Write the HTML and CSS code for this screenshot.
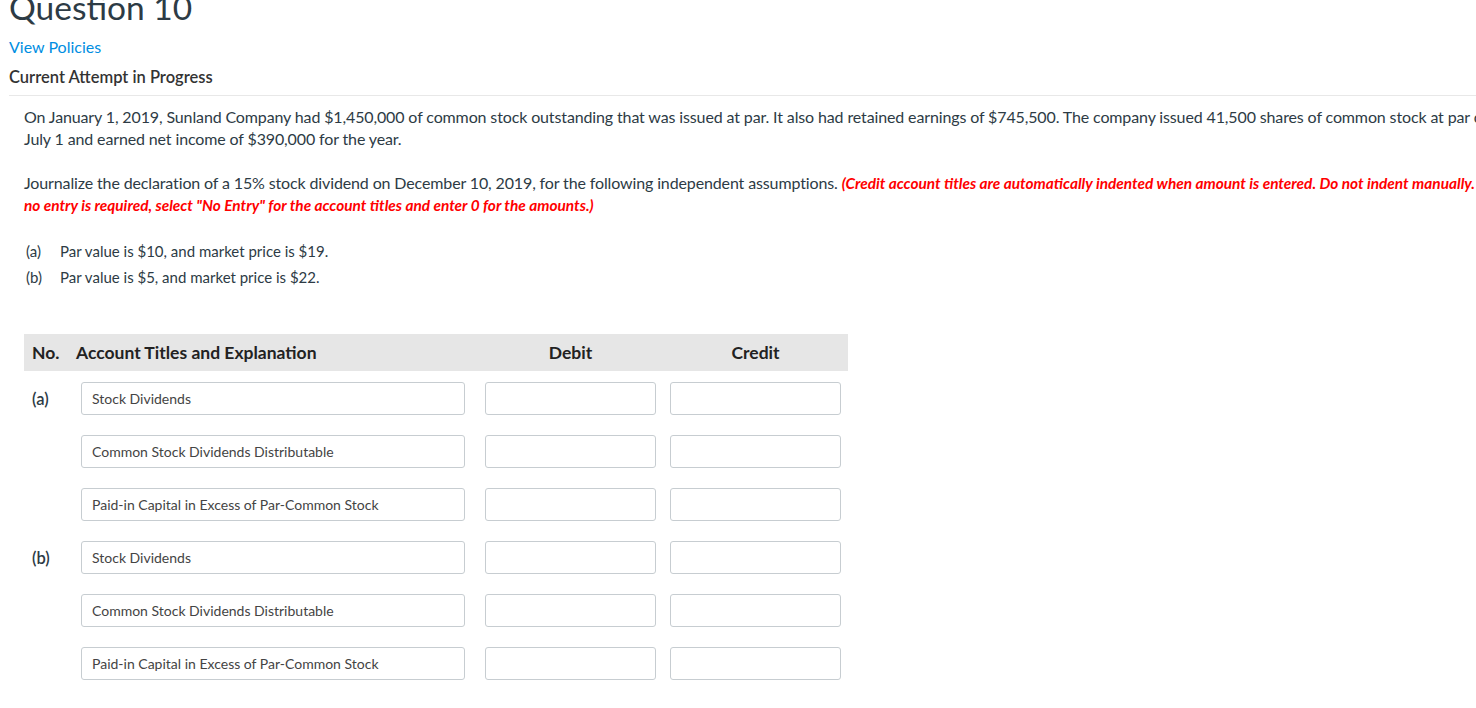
FILE: index.html
```html
<!DOCTYPE html>
<html lang="en">
<head>
  <meta charset="UTF-8" />
  <meta name="viewport" content="width=device-width, initial-scale=1.0" />
  <title>Question 10</title>
  <link rel="stylesheet" href="styles.css">
</head>
<body>
  <div class="pagina">
    <h1 class="titulo">Question 10</h1>
    <a class="politicas" href="#">View Policies</a>
    <div class="intento">Current Attempt in Progress</div>

    <div class="pregunta">
      <p>On January 1, 2019, Sunland Company had $1,450,000 of common stock outstanding that was issued at par. It also had retained earnings of $745,500. The company issued 41,500 shares of common stock at par on<br>July 1 and earned net income of $390,000 for the year.</p>

      <p>Journalize the declaration of a 15% stock dividend on December 10, 2019, for the following independent assumptions. <span class="aviso">(Credit account titles are automatically indented when amount is entered. Do not indent manually. If<br>no entry is required, select "No Entry" for the account titles and enter 0 for the amounts.)</span></p>

      <ul class="supuestos">
        <li><span class="letra">(a)</span>Par value is $10, and market price is $19.</li>
        <li><span class="letra">(b)</span>Par value is $5, and market price is $22.</li>
      </ul>

      <div class="tabla">
        <div class="cabecera">
          <div class="c-no">No.</div>
          <div class="c-cuenta">Account Titles and Explanation</div>
          <div class="c-monto">Debit</div>
          <div class="c-monto">Credit</div>
        </div>

        <div class="fila">
          <div class="etiqueta">(a)</div>
          <input class="cuenta" type="text" value="Stock Dividends">
          <input class="debe" type="text">
          <input class="haber" type="text">
        </div>
        <div class="fila">
          <div class="etiqueta"></div>
          <input class="cuenta" type="text" value="Common Stock Dividends Distributable">
          <input class="debe" type="text">
          <input class="haber" type="text">
        </div>
        <div class="fila">
          <div class="etiqueta"></div>
          <input class="cuenta" type="text" value="Paid-in Capital in Excess of Par-Common Stock">
          <input class="debe" type="text">
          <input class="haber" type="text">
        </div>

        <div class="fila">
          <div class="etiqueta">(b)</div>
          <input class="cuenta" type="text" value="Stock Dividends">
          <input class="debe" type="text">
          <input class="haber" type="text">
        </div>
        <div class="fila">
          <div class="etiqueta"></div>
          <input class="cuenta" type="text" value="Common Stock Dividends Distributable">
          <input class="debe" type="text">
          <input class="haber" type="text">
        </div>
        <div class="fila">
          <div class="etiqueta"></div>
          <input class="cuenta" type="text" value="Paid-in Capital in Excess of Par-Common Stock">
          <input class="debe" type="text">
          <input class="haber" type="text">
        </div>
      </div>
    </div>
  </div>
</body>
</html>
```

FILE: styles.css
```css
html, body {
  overflow: hidden;
}
body {
  margin: 0;
  font-family: Lato, "Open Sans", sans-serif;
  color: #2d3b45;
  background: #fff;
}
.pagina {
  width: 1700px;
  padding-left: 9px;
}
.titulo {
  font-size: 33.5px;
  font-weight: normal;
  line-height: 36px;
  margin: -11px 0 0 0;
}
.politicas {
  display: block;
  margin-top: 12px;
  font-size: 16px;
  line-height: 20px;
  color: #008ee2;
  text-decoration: none;
}
.intento {
  margin-top: 10px;
  font-size: 16.5px;
  line-height: 20px;
  font-weight: 600;
  color: #333;
  padding-bottom: 8px;
  border-bottom: 1px solid #e8e8e8;
}
.pregunta {
  padding: 10px 0 0 15px;
  font-size: 16px;
}
.pregunta p {
  margin: 0 0 22px 0;
  line-height: 22px;
  white-space: nowrap;
  letter-spacing: -0.13px;
}
.aviso {
  color: #ff0000;
  font-style: italic;
  font-weight: bold;
  font-size: 15.4px;
  letter-spacing: 0;
}
.supuestos {
  list-style: none;
  margin: 0;
  padding: 0 0 0 2px;
  font-size: 15px;
  line-height: 26px;
}
.letra {
  display: inline-block;
  width: 34px;
}
.tabla {
  margin-top: 44px;
  width: 824px;
}
.cabecera {
  display: grid;
  grid-template-columns: 52px 409px 171px 14px 171px;
  align-items: center;
  height: 37px;
  background: #e6e6e6;
  font-weight: bold;
  font-size: 17.5px;
  color: #222;
}
.c-no {
  padding-left: 8px;
}
.c-monto {
  text-align: center;
}
.c-monto + .c-monto {
  grid-column: 5;
}
.fila {
  display: flex;
  align-items: center;
  margin-top: 11px;
  margin-bottom: 9px;
}
.fila + .fila {
  margin-top: 20px;
  margin-bottom: 0;
}
.etiqueta {
  width: 57px;
  box-sizing: border-box;
  padding-left: 8px;
  font-size: 16.5px;
  font-weight: 600;
}
input {
  box-sizing: border-box;
  flex: none;
  height: 33px;
  border: 1px solid #c7cdd1;
  border-radius: 3px;
  font-family: Lato, "Open Sans", sans-serif;
  font-size: 14px;
  color: #444;
  padding: 0 10px;
  background: #fff;
}
.debe {
  width: 171px;
  margin-left: 20px;
}
.haber {
  width: 171px;
  margin-left: 14px;
}
.cuenta {
  width: 384px;
}
```
